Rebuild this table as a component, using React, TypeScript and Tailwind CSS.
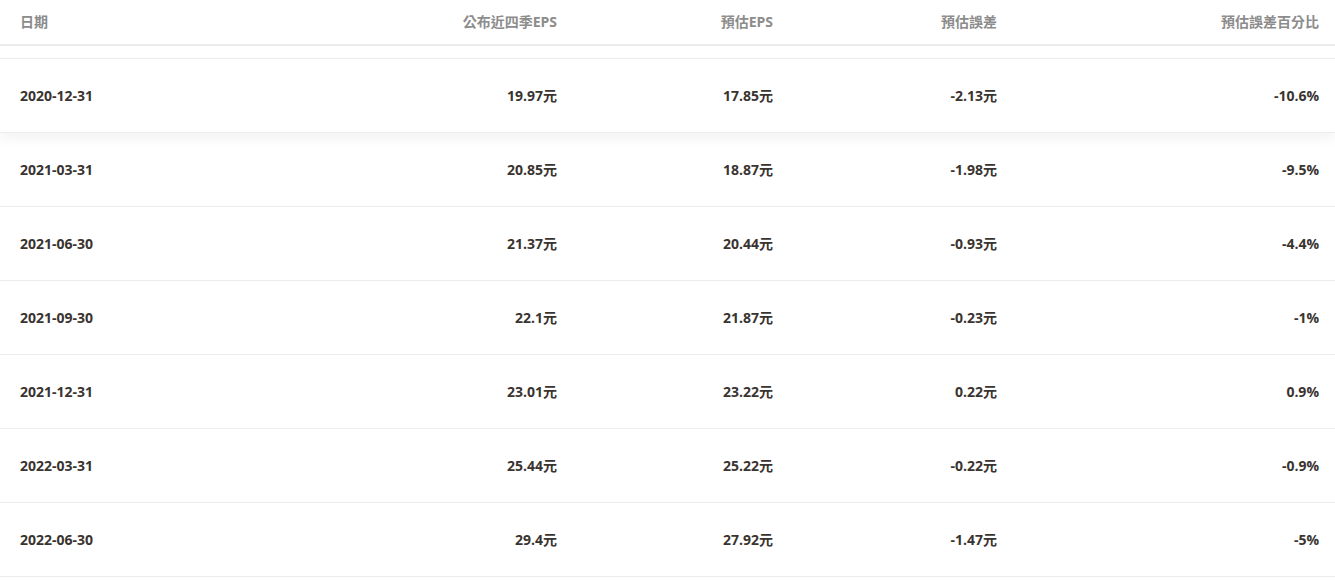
const rows = [
  ["2020-12-31", "19.97元", "17.85元", "-2.13元", "-10.6%"],
  ["2021-03-31", "20.85元", "18.87元", "-1.98元", "-9.5%"],
  ["2021-06-30", "21.37元", "20.44元", "-0.93元", "-4.4%"],
  ["2021-09-30", "22.1元", "21.87元", "-0.23元", "-1%"],
  ["2021-12-31", "23.01元", "23.22元", "0.22元", "0.9%"],
  ["2022-03-31", "25.44元", "25.22元", "-0.22元", "-0.9%"],
  ["2022-06-30", "29.4元", "27.92元", "-1.47元", "-5%"],
];

const cols = "grid grid-cols-[300px_273px_216px_224px_322px]";

export default function App() {
  return (
    <div
      className="w-[1335px] h-[580px] overflow-hidden bg-white"
      style={{ fontFamily: '"Open Sans", "Noto Sans CJK TC", sans-serif' }}
    >
      {/* 表頭 */}
      <div className={`${cols} h-[46px] items-center border-b-2 border-[#ececec] pb-[2px] text-[14px] font-bold text-[#8c8c8c]`}>
        <div className="pl-5">日期</div>
        <div className="pr-4 text-right">公布近四季EPS</div>
        <div className="pr-4 text-right">預估EPS</div>
        <div className="pr-4 text-right">預估誤差</div>
        <div className="pr-4 text-right">預估誤差百分比</div>
      </div>

      <div className="h-[12px]" />

      {/* 資料列 */}
      {rows.map((r, i) => (
        <div
          key={r[0]}
          className={`${cols} items-center border-b border-[#ededed] text-[14px] font-bold text-[#3a3430] ${
            i === 0 ? "relative h-[75px] border-t shadow-[0_6px_12px_rgba(0,0,0,0.05)]" : "h-[74px]"
          }`}
        >
          <div className="pl-5">{r[0]}</div>
          <div className="pr-4 text-right">{r[1]}</div>
          <div className="pr-4 text-right">{r[2]}</div>
          <div className="pr-4 text-right">{r[3]}</div>
          <div className="pr-4 text-right">{r[4]}</div>
        </div>
      ))}
    </div>
  );
}
